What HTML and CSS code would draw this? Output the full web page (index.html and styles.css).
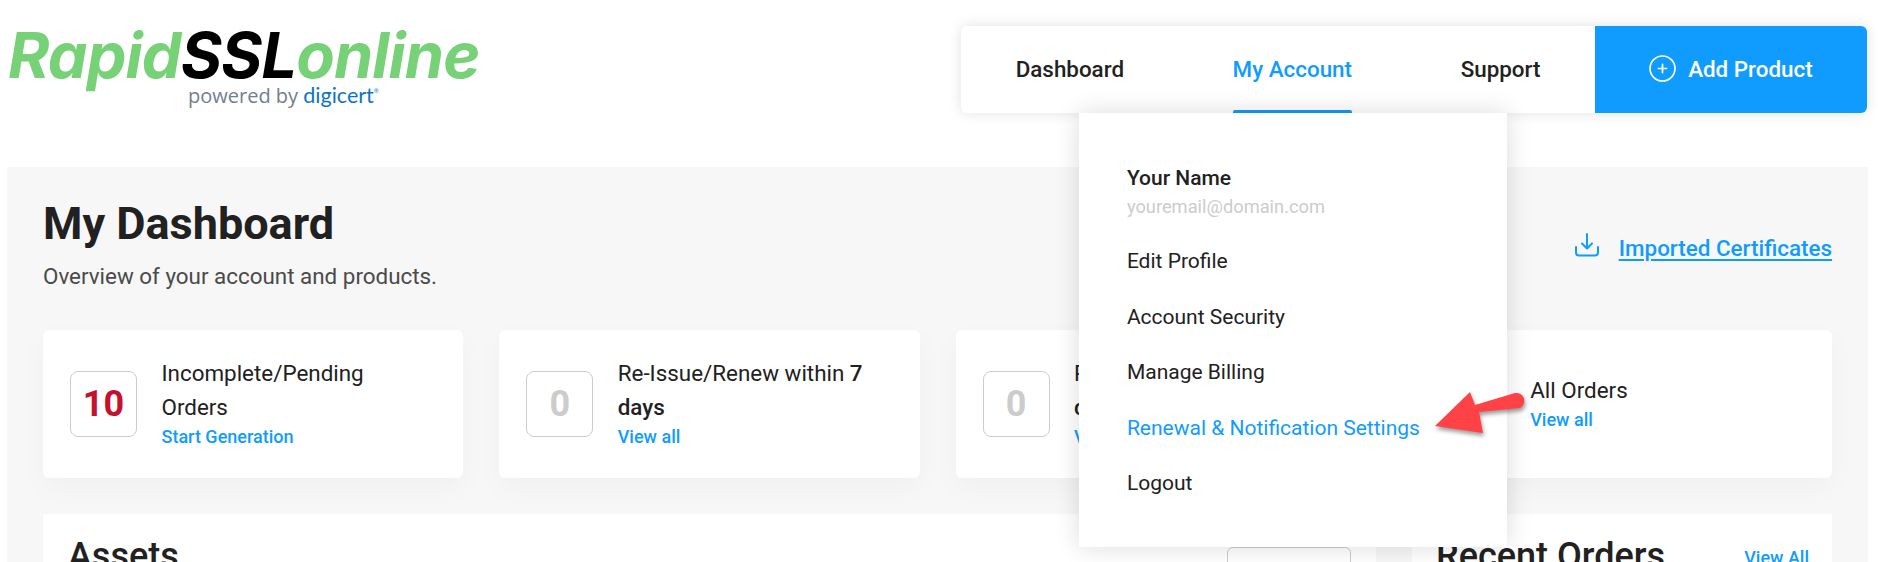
FILE: index.html
```html
<!DOCTYPE html>
<html lang="en">
<head>
<meta charset="utf-8">
<title>My Dashboard</title>
<link rel="stylesheet" href="styles.css">
</head>
<body>
<div class="page">
  <header class="topbar">
    <a class="logo" href="#">
      <div class="wordmark"><span class="wm-green">Rapid</span><span class="wm-black">SSL</span><span class="wm-green">online</span></div>
      <div class="powered">powered by <span class="digicert">digicert</span><span class="digicert-mark">®</span></div>
    </a>
    <nav class="nav">
      <a class="nav-item" href="#">Dashboard</a>
      <a class="nav-item nav-item-active" href="#">My Account</a>
      <a class="nav-item" href="#">Support</a>
      <a class="nav-add" href="#">
        <svg class="nav-add-icon" viewBox="0 0 26 26" fill="none" stroke="#fff" stroke-width="1.6" stroke-linecap="round"><circle cx="13" cy="13" r="12"/><path d="M13 9v8M9 13h8"/></svg>
        <span>Add Product</span>
      </a>
      <div class="dropdown">
        <div class="dd-user">
          <div class="dd-name">Your Name</div>
          <div class="dd-email">youremail@domain.com</div>
        </div>
        <a class="dd-link" href="#">Edit Profile</a>
        <a class="dd-link" href="#">Account Security</a>
        <a class="dd-link" href="#">Manage Billing</a>
        <a class="dd-link dd-link-active" href="#">Renewal &amp; Notification Settings</a>
        <a class="dd-link" href="#">Logout</a>
      </div>
    </nav>
  </header>

  <main class="panel">
    <div class="panel-head">
      <div>
        <h1 class="panel-title">My Dashboard</h1>
        <p class="panel-sub">Overview of your account and products.</p>
      </div>
      <a class="imported" href="#">
        <svg class="imported-icon" viewBox="0 0 24 24" fill="none" stroke="#109cff" stroke-width="2" stroke-linecap="round" stroke-linejoin="round"><path d="M12 1v14M7 10.500l5 5 5-5"/><path d="M1 14v5.500a3 3 0 0 0 3 3h16a3 3 0 0 0 3-3V14"/></svg>
        <span class="imported-text">Imported Certificates</span>
      </a>
    </div>

    <section class="stats">
      <div class="stat">
        <div class="stat-num stat-num-alert">10</div>
        <div class="stat-body">
          <div class="stat-title">Incomplete/Pending<br>Orders</div>
          <a class="stat-link" href="#">Start Generation</a>
        </div>
      </div>
      <div class="stat">
        <div class="stat-num">0</div>
        <div class="stat-body">
          <div class="stat-title">Re-Issue/Renew within <strong>7<br>days</strong></div>
          <a class="stat-link" href="#">View all</a>
        </div>
      </div>
      <div class="stat">
        <div class="stat-num">0</div>
        <div class="stat-body">
          <div class="stat-title">Re-Issue/Renew within <strong>30<br>days</strong></div>
          <a class="stat-link" href="#">View all</a>
        </div>
      </div>
      <div class="stat">
        <div class="stat-num">0</div>
        <div class="stat-body">
          <div class="stat-title">All Orders</div>
          <a class="stat-link" href="#">View all</a>
        </div>
      </div>
    </section>

    <section class="lower">
      <div class="lower-card">
        <h2 class="lower-title">Assets</h2>
        <a class="lower-btn" href="#"></a>
      </div>
      <div class="lower-card lower-card-side">
        <h2 class="lower-title">Recent Orders</h2>
        <a class="lower-link" href="#">View All</a>
      </div>
    </section>
  </main>

  <svg class="callout" viewBox="0 0 100 60" fill="#ff4245"><path d="M5 46 40 12 45 25 85 13a8 8 0 0 1 5 15L49 32 53 53z"/></svg>
</div>
</body>
</html>
```

FILE: styles.css
```css
* { box-sizing: border-box; }
html, body { margin: 0; height: 562px; overflow: hidden; background: #fff; }
body { font-family: Roboto, "Liberation Sans", sans-serif; color: #212121; }
a { text-decoration: none; color: inherit; }
h1, h2, p { margin: 0; }

.page { position: relative; height: 562px; overflow: hidden; }

.topbar { display: flex; justify-content: space-between; align-items: flex-start; height: 167px; padding-right: 11px; }

.logo { display: block; margin: 24px 0 0 8px; }
.wordmark { font-family: Inter, "Liberation Sans", sans-serif; font-style: italic; font-weight: 700; font-size: 63px; line-height: 63px; letter-spacing: -0.850px; white-space: nowrap; }
.wm-green { color: #77d177; }
.wm-black { color: #000; }
.powered { font-family: "Open Sans", sans-serif; font-size: 20px; line-height: 24px; color: #70808e; margin: -8px 0 0 180px; white-space: nowrap; }
.digicert { font-family: Lato, sans-serif; color: #0b74c6; font-size: 21.500px; font-weight: 400; }
.digicert-mark { font-size: 6px; color: #0b74c6; vertical-align: 10px; }

.nav { position: relative; display: flex; align-items: stretch; height: 87px; margin-top: 26px; background: #fff; border-radius: 6px; box-shadow: 0 0 14px rgba(0, 0, 0, .12); font-size: 22.400px; font-weight: 500; }
.nav-item { position: relative; display: flex; align-items: center; padding: 0 54.300px 2px; }
.nav-item-active { color: #109cff; }
.nav-item-active::after { content: ""; position: absolute; left: 54.300px; right: 54.300px; bottom: 0; height: 3px; background: #109cff; border-radius: 2px 2px 0 0; }
.nav-add { display: flex; align-items: center; gap: 12px; padding: 0 54.400px 2px; background: #109cff; color: #fff; border-radius: 0 6px 6px 0; }
.nav-add-icon { width: 27px; height: 27px; }

.dropdown { position: absolute; z-index: 5; top: 87px; left: 117.500px; width: 428px; height: 434px; padding: 48px 48px 0; background: #fff; box-shadow: 0 0 24px rgba(0, 0, 0, .14); font-size: 21px; font-weight: 400; }
.dd-user { margin-bottom: 16px; }
.dd-name { font-weight: 500; line-height: 35px; }
.dd-email { font-size: 18.300px; line-height: 22px; color: #ccc; }
.dd-link { display: block; height: 55.500px; line-height: 55.500px; white-space: nowrap; }
.dd-link-active { color: #109cff; }

.panel { margin: 0 10px 0 7px; padding: 0 36px; height: 395px; background: #f7f7f7; }
.panel-head { display: flex; justify-content: space-between; align-items: center; height: 163px; }
.panel-title { font-size: 45px; line-height: 60px; font-weight: 700; margin-top: -13px; }
.panel-sub { font-size: 22.400px; line-height: 30px; color: #4a4a4a; margin-top: 7px; }
.imported { display: flex; align-items: center; gap: 20px; color: #109cff; font-size: 22.400px; font-weight: 500; margin-top: -2px; }
.imported-icon { width: 24px; height: 24px; margin-top: -6px; }
.imported-text { text-decoration: underline; text-underline-offset: 3px; }

.stats { display: grid; grid-template-columns: repeat(4, 1fr); gap: 36px; }
.stat { display: flex; align-items: center; gap: 24.500px; height: 148px; padding-left: 27px; background: #fff; border-radius: 6px; box-shadow: 0 10px 30px rgba(0, 0, 0, .03); }
.stat-num { display: flex; align-items: center; justify-content: center; flex: none; width: 67px; height: 66px; border: 1px solid #ccc; border-radius: 8px; font-size: 36px; font-weight: 700; color: #ccc; }
.stat-num-alert { color: #c5102f; }
.stat-body { margin-top: -2px; }
.stat-title { font-size: 22.400px; line-height: 34px; }
.stat-title strong { font-weight: 500; }
.stat-link { display: block; font-size: 18px; line-height: 26px; font-weight: 500; color: #109cff; }

.lower { display: grid; grid-template-columns: 1fr 420px; gap: 36px; margin-top: 36px; }
.lower-card { display: flex; justify-content: space-between; align-items: flex-start; height: 120px; padding: 20px 25px; background: #fff; }
.lower-card-side { padding: 20px 23px 20px 24px; }
.lower-title { font-size: 36px; line-height: 44px; font-weight: 500; }
.lower-btn { display: block; width: 124px; height: 60px; margin-top: 13px; border: 1px solid #ccc; border-radius: 6px; }
.lower-link { font-size: 18px; font-weight: 500; color: #109cff; margin-top: 13px; }

.callout { position: absolute; z-index: 6; left: 1430px; top: 380px; width: 100px; height: 60px; filter: drop-shadow(1px 3px 2px rgba(0, 0, 0, .4)); }
```
